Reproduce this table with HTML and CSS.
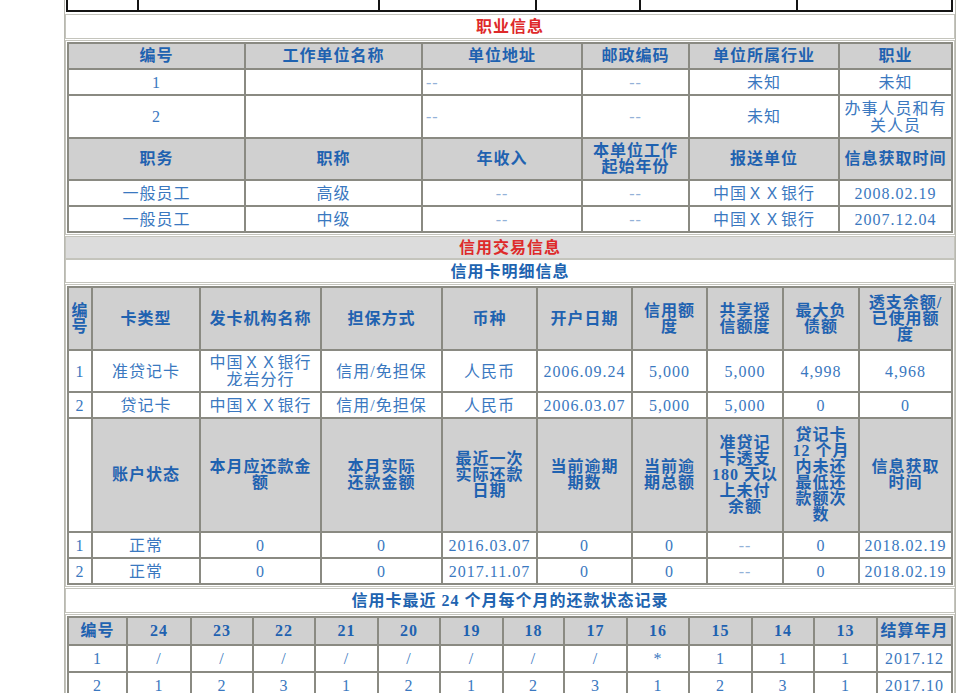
FILE: index.html
```html
<!DOCTYPE html>
<html lang="zh-CN">
<head>
<meta charset="utf-8">
<title>个人信用报告</title>
<link rel="stylesheet" href="styles.css">
</head>
<body>
<div class="report">
  <div class="top">
    <table class="black">
      <colgroup><col class="b1"><col class="b2"><col class="b3"><col class="b4"><col class="b5"><col class="b6"></colgroup>
      <tr><td></td><td></td><td></td><td></td><td></td><td></td></tr>
    </table>
  </div>

  <div class="title t25 red">职业信息</div>

  <div class="sec">
    <table class="grid">
      <colgroup>
        <col class="w177"><col class="w177"><col class="w160"><col class="w107"><col class="w150"><col class="w113">
      </colgroup>
      <tr class="h26"><th>编号</th><th>工作单位名称</th><th>单位地址</th><th>邮政编码</th><th>单位所属行业</th><th>职业</th></tr>
      <tr class="h26"><td>1</td><td></td><td class="l dash">--</td><td class="dash">--</td><td>未知</td><td>未知</td></tr>
      <tr class="h43"><td>2</td><td></td><td class="l dash">--</td><td class="dash">--</td><td>未知</td><td>办事人员和有<br>关人员</td></tr>
      <tr class="h42"><th>职务</th><th>职称</th><th>年收入</th><th>本单位工作<br>起始年份</th><th>报送单位</th><th>信息获取时间</th></tr>
      <tr class="h26"><td>一般员工</td><td>高级</td><td class="dash">--</td><td class="dash">--</td><td>中国ＸＸ银行</td><td>2008.02.19</td></tr>
      <tr class="h26"><td>一般员工</td><td>中级</td><td class="dash">--</td><td class="dash">--</td><td>中国ＸＸ银行</td><td>2007.12.04</td></tr>
    </table>
  </div>

  <div class="group">
    <div class="title t23 red shade">信用交易信息</div>
    <div class="title t24 blue">信用卡明细信息</div>
  </div>

  <div class="sec">
    <table class="grid">
      <colgroup>
        <col class="w24"><col class="w108"><col class="w121"><col class="w121"><col class="w95"><col class="w95"><col class="w75"><col class="w76"><col class="w76"><col class="w93">
      </colgroup>
      <tr class="h63"><th>编<br>号</th><th>卡类型</th><th>发卡机构名称</th><th>担保方式</th><th>币种</th><th>开户日期</th><th>信用额<br>度</th><th>共享授<br>信额度</th><th>最大负<br>债额</th><th>透支余额/<br>已使用额<br>度</th></tr>
      <tr class="h42"><td>1</td><td>准贷记卡</td><td>中国ＸＸ银行<br>龙岩分行</td><td>信用/免担保</td><td>人民币</td><td>2006.09.24</td><td>5,000</td><td>5,000</td><td>4,998</td><td>4,968</td></tr>
      <tr class="h26"><td>2</td><td>贷记卡</td><td>中国ＸＸ银行</td><td>信用/免担保</td><td>人民币</td><td>2006.03.07</td><td>5,000</td><td>5,000</td><td>0</td><td>0</td></tr>
      <tr class="h114"><td></td><th>账户状态</th><th>本月应还款金<br>额</th><th>本月实际<br>还款金额</th><th>最近一次<br>实际还款<br>日期</th><th>当前逾期<br>期数</th><th>当前逾<br>期总额</th><th>准贷记<br>卡透支<br>180 天以<br>上未付<br>余额</th><th>贷记卡<br>12 个月<br>内未还<br>最低还<br>款额次<br>数</th><th>信息获取<br>时间</th></tr>
      <tr class="h26"><td>1</td><td>正常</td><td>0</td><td>0</td><td>2016.03.07</td><td>0</td><td>0</td><td class="dash">--</td><td>0</td><td>2018.02.19</td></tr>
      <tr class="h26"><td>2</td><td>正常</td><td>0</td><td>0</td><td>2017.11.07</td><td>0</td><td>0</td><td class="dash">--</td><td>0</td><td>2018.02.19</td></tr>
    </table>
  </div>

  <div class="title t25 blue">信用卡最近 24 个月每个月的还款状态记录</div>

  <div class="sec">
    <table class="grid">
      <colgroup>
        <col class="w59"><col class="w64"><col class="w62"><col class="w62"><col class="w63"><col class="w62"><col class="w63"><col class="w61"><col class="w63"><col class="w62"><col class="w63"><col class="w62"><col class="w63"><col class="w75">
      </colgroup>
      <tr class="h28"><th>编号</th><th>24</th><th>23</th><th>22</th><th>21</th><th>20</th><th>19</th><th>18</th><th>17</th><th>16</th><th>15</th><th>14</th><th>13</th><th>结算年月</th></tr>
      <tr class="h27"><td>1</td><td>/</td><td>/</td><td>/</td><td>/</td><td>/</td><td>/</td><td>/</td><td>/</td><td>*</td><td>1</td><td>1</td><td>1</td><td>2017.12</td></tr>
      <tr class="h27"><td>2</td><td>1</td><td>2</td><td>3</td><td>1</td><td>2</td><td>1</td><td>2</td><td>3</td><td>1</td><td>2</td><td>3</td><td>1</td><td>2017.10</td></tr>
    </table>
  </div>
</div>
</body>
</html>
```

FILE: styles.css
```css
html, body {
  margin: 0;
  padding: 0;
  background: #ffffff;
}

body {
  font-family: "Liberation Serif", "Noto Sans CJK SC", serif;
  overflow: hidden;
}

.report {
  margin-left: 64px;
  width: 892px;
  box-sizing: border-box;
  border-left: 1px solid #b8b8b0;
  border-right: 1px solid #b8b8b0;
  display: flex;
  flex-direction: column;
  gap: 1px;
  min-height: 760px;
}

.top {
  margin: -18px 0 1px 1px;
}

table.black {
  width: 887px;
  border-collapse: separate;
  border-spacing: 0;
  table-layout: fixed;
  border-top: 2px solid #141414;
  border-left: 2px solid #141414;
}

table.black td {
  height: 28px;
  padding: 0;
  border-right: 2px solid #141414;
  border-bottom: 2px solid #141414;
  box-sizing: border-box;
}

.b1 { width: 71px; }
.b2 { width: 241px; }
.b3 { width: 157px; }
.b4 { width: 104px; }
.b5 { width: 157px; }
.b6 { width: 155px; }

.title {
  box-sizing: border-box;
  border: 1px solid #c4c4bc;
  display: flex;
  align-items: center;
  justify-content: center;
  font-family: "Liberation Serif", "Noto Sans CJK SC", sans-serif;
  font-weight: bold;
  font-size: 16px;
  line-height: 17px;
  letter-spacing: 1px;
  background: #ffffff;
}

.t23 { height: 23px; }
.t24 { height: 24px; }
.t25 { height: 25px; }

.red { color: #de2a2a; }
.blue { color: #2063b0; }
.shade { background: #dcdcdc; }

.group {
  display: flex;
  flex-direction: column;
}

.sec {
  border: 1px solid #c4c4bc;
  padding: 1px;
}

table.grid {
  width: 886px;
  border-collapse: separate;
  border-spacing: 0;
  table-layout: fixed;
  border-top: 2px solid #8a8a82;
  border-left: 2px solid #8a8a82;
}

.grid th,
.grid td {
  border-right: 2px solid #8a8a82;
  border-bottom: 2px solid #8a8a82;
  padding: 0 1px;
  text-align: center;
  vertical-align: middle;
  white-space: nowrap;
  overflow: hidden;
  letter-spacing: 1px;
  box-sizing: border-box;
}

.grid th {
  background: #d0d0d0;
  color: #1f62b0;
  font-weight: bold;
  font-size: 16px;
  line-height: 16px;
}

.grid td {
  background: #ffffff;
  color: #3a78c0;
  font-weight: normal;
  font-size: 16px;
  line-height: 17px;
}

.grid td.l {
  text-align: left;
  padding-left: 3px;
}

.grid td.dash {
  color: #93b2d8;
}

.h26 { height: 26px; }
.h27 { height: 27px; }
.h28 { height: 28px; }
.h42 { height: 42px; }
.h43 { height: 43px; }
.h63 { height: 63px; }
.h114 { height: 114px; }

.w24 { width: 24px; }
.w59 { width: 59px; }
.w61 { width: 61px; }
.w62 { width: 62px; }
.w63 { width: 63px; }
.w64 { width: 64px; }
.w75 { width: 75px; }
.w76 { width: 76px; }
.w93 { width: 93px; }
.w95 { width: 95px; }
.w107 { width: 107px; }
.w108 { width: 108px; }
.w113 { width: 113px; }
.w121 { width: 121px; }
.w150 { width: 150px; }
.w160 { width: 160px; }
.w177 { width: 177px; }
```
